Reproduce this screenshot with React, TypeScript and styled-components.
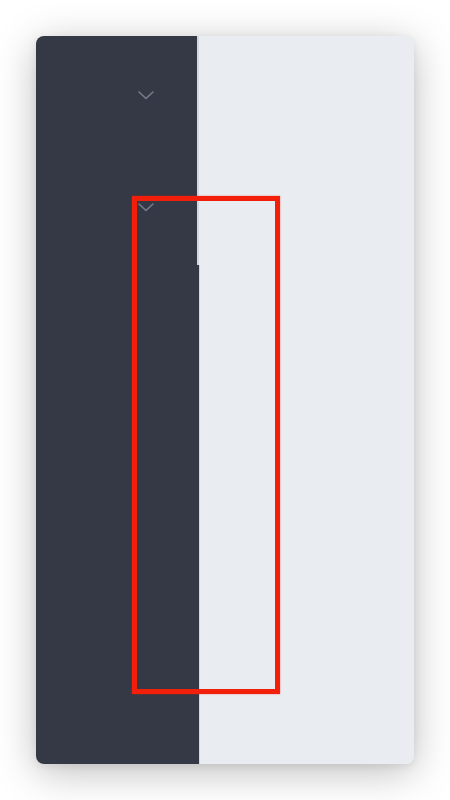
import React from "react";
import styled, { createGlobalStyle } from "styled-components";

const GlobalStyle = createGlobalStyle`
  html, body {
    margin: 0;
    padding: 0;
    background: #ffffff;
    font-family: "Inter", "Liberation Sans", sans-serif;
  }
`;

const Page = styled.div`
  width: 450px;
  height: 800px;
  padding: 36px;
  box-sizing: border-box;
`;

const Card = styled.div`
  position: relative;
  width: 378px;
  height: 728px;
  display: flex;
  border-radius: 8px;
  overflow: hidden;
  background: #e9ecf1;
  box-shadow: 0 8px 40px rgba(0, 0, 0, 0.26), 0 2px 8px rgba(0, 0, 0, 0.08);
`;

const SideColumn = styled.div`
  width: 164px;
  display: flex;
  flex-direction: column;
`;

const SideBlock = styled.div<{ $width: number; $grow?: boolean }>`
  width: ${(p) => p.$width}px;
  background: #343945;
  border-right: 2px solid #d3d7de;
  box-sizing: content-box;
  flex: ${(p) => (p.$grow ? 1 : "none")};
`;

const MenuGroup = styled.div`
  padding-top: 3px;
  height: 226px;
  display: flex;
  flex-direction: column;
`;

const MenuRow = styled.div`
  height: 112px;
  display: flex;
  align-items: center;
  justify-content: flex-end;
  padding-right: 43px;
`;

const Main = styled.div`
  flex: 1;
  background: #e9ecf1;
`;

const Highlight = styled.div`
  position: absolute;
  left: 96px;
  top: 160px;
  width: 148px;
  height: 498px;
  box-sizing: border-box;
  border: 5.5px solid #f2200b;
  box-shadow: 0 0 1.5px rgba(242, 32, 11, 0.6);
  pointer-events: none;
`;

const Chevron = () => (
  <svg width="16" height="9" viewBox="0 0 16 9" fill="none">
    <path
      d="M1 1 L8 7.5 L15 1"
      stroke="#767c8a"
      strokeWidth="1.6"
      strokeLinecap="round"
      strokeLinejoin="round"
    />
  </svg>
);

export default function App() {
  return (
    <>
      <GlobalStyle />
      <Page>
        <Card>
          <SideColumn>
            <SideBlock $width={161}>
              <MenuGroup>
                <MenuRow>
                  <Chevron />
                </MenuRow>
                <MenuRow>
                  <Chevron />
                </MenuRow>
              </MenuGroup>
            </SideBlock>
            <SideBlock $width={163} $grow />
          </SideColumn>
          <Main />
          <Highlight />
        </Card>
      </Page>
    </>
  );
}
